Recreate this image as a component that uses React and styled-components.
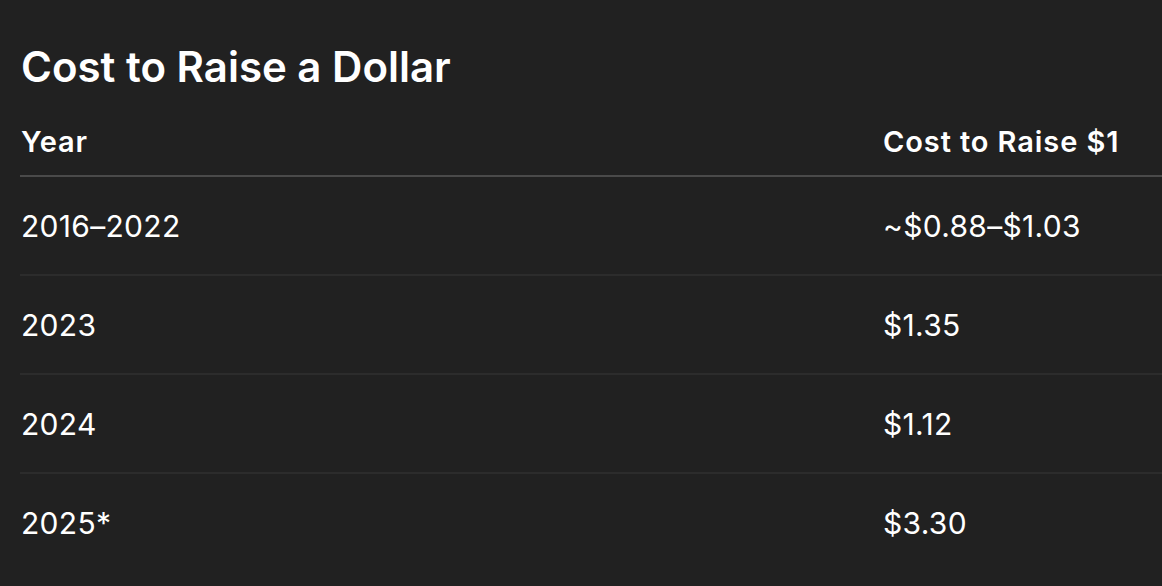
import React from 'react';
import styled, { createGlobalStyle } from 'styled-components';

const GlobalStyle = createGlobalStyle`
  html, body {
    margin: 0;
    padding: 0;
    background: #212121;
    overflow: hidden;
  }
  body {
    font-family: Inter, "Noto Sans", "Liberation Sans", sans-serif;
    color: #ffffff;
  }
`;

// Page wrapper
const Page = styled.div`
  padding: 0 0 0 20px;
  width: 1200px;
`;

// Title
const Title = styled.h2`
  margin: 0 0 17px;
  padding: 44px 0 0 1px;
  font-size: 42px;
  font-weight: 600;
  line-height: 46px;
`;

// Table
const Table = styled.table`
  width: 100%;
  border-collapse: collapse;
`;

const HeadCell = styled.th`
  text-align: left;
  font-size: 29px;
  font-weight: 600;
  letter-spacing: 0.9px;
  height: 68px;
  padding: 0 0 0 1px;
  border-bottom: 2px solid #4a4a4a;
  width: ${(p) => p.$w || 'auto'};
`;

const Row = styled.tr`
  & + & td {
    border-top: 2px solid #2c2c2c;
  }
`;

const Cell = styled.td`
  font-size: 30px;
  font-weight: 400;
  letter-spacing: 0.3px;
  height: 97px;
  padding: 0 0 0 1px;
`;

const rows = [
  ['2016–2022', '~$0.88–$1.03'],
  ['2023', '$1.35'],
  ['2024', '$1.12'],
  ['2025*', '$3.30'],
];

const App = () => {
  return (
    <>
      <GlobalStyle />
      <Page>
        <Title>Cost to Raise a Dollar</Title>
        <Table>
          <thead>
            <tr>
              <HeadCell $w="861px">Year</HeadCell>
              <HeadCell>Cost to Raise $1</HeadCell>
            </tr>
          </thead>
          <tbody>
            {rows.map(([year, cost]) => (
              <Row key={year}>
                <Cell>{year}</Cell>
                <Cell>{cost}</Cell>
              </Row>
            ))}
          </tbody>
        </Table>
      </Page>
    </>
  );
};

export default App;
